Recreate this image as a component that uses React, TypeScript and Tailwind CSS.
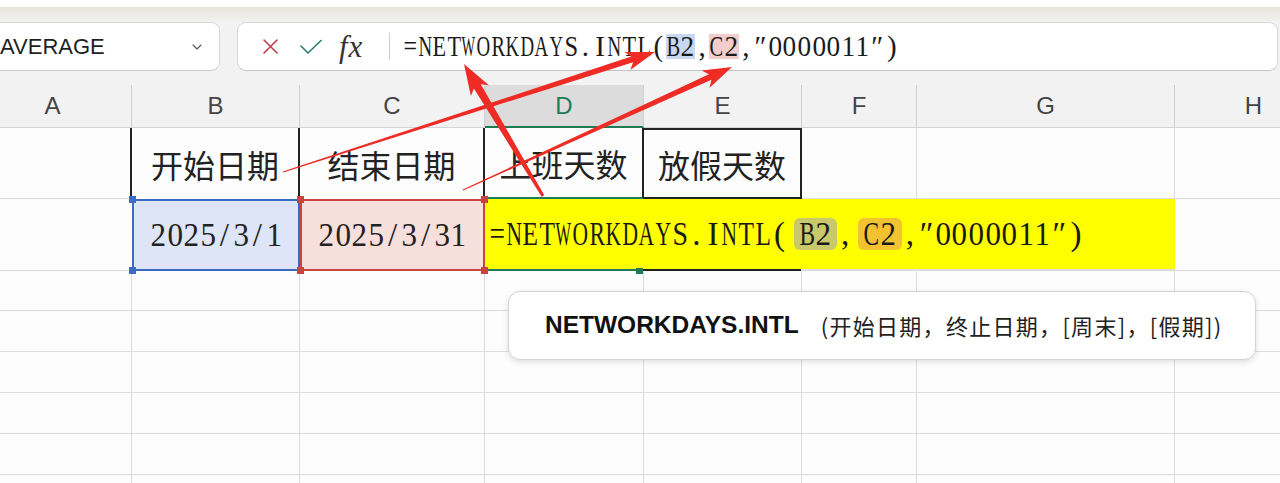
import React from 'react'
import { ChevronDown } from 'lucide-react'

// Times-like advance widths, used to squeeze glyphs into SimSun-style half-width cells
const ADV: Record<string, number> = {
  N: 0.722, E: 0.611, T: 0.611, W: 0.944, O: 0.722, R: 0.667, K: 0.722, D: 0.722,
  A: 0.722, Y: 0.722, S: 0.556, I: 0.333, L: 0.611, B: 0.667, C: 0.667,
  '=': 0.564, '(': 0.333, ')': 0.333, ',': 0.25, '.': 0.25, '″': 0.4, '/': 0.278,
}

function Mono({ text, cell }: { text: string; cell: string }) {
  return (
    <>
      {Array.from(text).map((ch, i) => {
        const s = Math.min(1, 0.47 / (ADV[ch] ?? 0.5))
        return (
          <span
            key={i}
            className={`inline-flex shrink-0 justify-center ${cell}`}
            style={s < 1 ? { transform: `scaleX(${s.toFixed(3)})` } : undefined}
          >
            {ch}
          </span>
        )
      })}
    </>
  )
}

function arrow(x0: number, y0: number, x1: number, y1: number, w0: number, w1: number, hl: number, hw: number) {
  const dx = x1 - x0
  const dy = y1 - y0
  const len = Math.hypot(dx, dy)
  const ux = dx / len
  const uy = dy / len
  const nx = -uy
  const ny = ux
  const bx = x1 - ux * hl
  const by = y1 - uy * hl
  const p = (x: number, y: number) => `${x.toFixed(1)},${y.toFixed(1)}`
  return [
    p(x0 + (nx * w0) / 2, y0 + (ny * w0) / 2),
    p(bx + (nx * w1) / 2, by + (ny * w1) / 2),
    p(bx - ux * 5 + (nx * hw) / 2, by - uy * 5 + (ny * hw) / 2),
    p(x1, y1),
    p(bx - ux * 5 - (nx * hw) / 2, by - uy * 5 - (ny * hw) / 2),
    p(bx - (nx * w1) / 2, by - (ny * w1) / 2),
    p(x0 - (nx * w0) / 2, y0 - (ny * w0) / 2),
  ].join(' ')
}

const ARROWS = [
  arrow(283, 172, 655, 52, 1.2, 6, 24, 19),
  arrow(463, 190, 732, 67, 1, 6, 24, 19),
  arrow(543, 196, 464, 64, 3, 8, 26, 21),
]

const HEAD = [
  { id: 'A', w: 'w-[158px]' },
  { id: 'B', w: 'w-[168px]' },
  { id: 'C', w: 'w-[185px]' },
  { id: 'D', w: 'w-[159px]' },
  { id: 'E', w: 'w-[158px]' },
  { id: 'F', w: 'w-[115px]' },
  { id: 'G', w: 'w-[258px]' },
  { id: 'H', w: 'w-[158px]' },
]

const GRID = 'shrink-0 border-r border-b border-[#dcdcdc]'
const CJK = "font-['Noto_Sans_CJK_SC',sans-serif]"
const SERIF = "font-['Liberation_Serif','Noto_Sans_CJK_SC',serif]"

function Square({ pos, color }: { pos: string; color: string }) {
  return <span className={`absolute z-10 h-[7px] w-[7px] ${pos} ${color}`} />
}

export default function App() {
  return (
    <div className="relative h-[483px] w-[1280px] overflow-hidden bg-white font-['Liberation_Sans',sans-serif] text-[#222]">
      <div className="h-[7px] bg-white" />
      <div className="h-[15px] bg-linear-to-b from-[#e7e4dc] to-[#f2f2f2]" />

      {/* name box + formula bar */}
      <div className="flex h-[49px] bg-[#f2f2f2]">
        <div className="ml-[-14px] flex h-full w-[234px] shrink-0 items-center rounded-[9px] border border-[#d8d8d8] border-b-[#c9c9c9] bg-white pl-[13px] pr-[14px]">
          <span className="text-[22px] text-[#1f1f1f]">AVERAGE</span>
          <ChevronDown size={16} strokeWidth={1.6} className="ml-auto text-[#555]" />
        </div>
        <div className="ml-[17px] flex h-full w-[1041px] shrink-0 items-center rounded-[9px] border border-[#d8d8d8] border-b-[#c4c4c4] bg-white pl-[25px]">
          <svg width="15" height="15" viewBox="0 0 15 15" className="shrink-0">
            <path d="M1 1L14 14M14 1L1 14" stroke="#c33a4e" strokeWidth="1.6" strokeLinecap="round" />
          </svg>
          <svg width="22" height="16" viewBox="0 0 22 16" className="ml-[22px] shrink-0">
            <path d="M1 7L8 14L21 1.5" stroke="#2c7c6c" strokeWidth="1.6" fill="none" strokeLinecap="round" strokeLinejoin="round" />
          </svg>
          <span className="ml-[17px] w-[28px] font-['Liberation_Serif',serif] text-[31px] italic leading-none tracking-[1px] text-[#333]">fx</span>
          <span className="ml-[22px] h-[27px] w-px bg-[#cfcfcf]" />
          <div className={`ml-[13px] flex items-center ${SERIF} text-[29px] leading-none text-[#1a1a1a]`}>
            <Mono text="=NETWORKDAYS.INTL(" cell="w-[14.6px]" />
            <span className="flex h-[25px] items-center bg-[#c9d8f1]">
              <Mono text="B2" cell="w-[14.6px]" />
            </span>
            <Mono text="," cell="w-[14.6px]" />
            <span className="flex h-[25px] items-center bg-[#f1cdcd]">
              <Mono text="C2" cell="w-[14.6px]" />
            </span>
            <Mono text=",″0000011″)" cell="w-[14.6px]" />
          </div>
        </div>
      </div>
      <div className="h-[14px] bg-[#f2f2f2]" />

      {/* column headers */}
      <div className="ml-[-26px] flex h-[43px] bg-[#f2f2f2]">
        {HEAD.map((c) =>
          c.id === 'D' ? (
            <div key={c.id} className={`${c.w} flex shrink-0 items-center justify-center border-r border-b-2 border-r-[#cfcfcf] border-b-[#1e7b56] bg-[#dcdcdc] text-[24px] text-[#1f7a5c]`}>
              {c.id}
            </div>
          ) : (
            <div key={c.id} className={`${c.w} flex shrink-0 items-center justify-center border-r border-b border-r-[#cfcfcf] border-b-[#d4d4d4] text-[24px] text-[#444]`}>
              {c.id}
            </div>
          ),
        )}
      </div>

      {/* sheet */}
      <div className="ml-[-26px] flex flex-col bg-[#fdfdfd]">
        <div className="flex h-[71px]">
          <div className="w-[158px] shrink-0 border-r-2 border-b border-r-[#222] border-b-[#dcdcdc]" />
          <div className={`flex w-[168px] shrink-0 items-center justify-center border-r-2 border-r-[#222] ${CJK} text-[32px]`}>开始日期</div>
          <div className={`flex w-[185px] shrink-0 items-center justify-center border-r-2 border-r-[#222] ${CJK} text-[32px]`}>结束日期</div>
          <div className={`flex w-[159px] shrink-0 items-center justify-center border-r-2 border-b-2 border-r-[#222] border-b-[#1e7b56] ${CJK} text-[32px]`}>上班天数</div>
          <div className={`flex w-[158px] shrink-0 items-center justify-center border-t-2 border-r-2 border-b-2 border-[#222] ${CJK} text-[32px]`}>放假天数</div>
          <div className={`w-[115px] ${GRID}`} />
          <div className={`w-[258px] ${GRID}`} />
          <div className={`w-[158px] ${GRID}`} />
        </div>

        <div className="flex h-[72px]">
          <div className="w-[158px] shrink-0 border-b border-[#dcdcdc]" />
          <div className={`relative flex w-[168px] shrink-0 items-center justify-center border-2 border-[#3b6bc5] bg-[#dde5f6] ${SERIF} text-[33px] leading-none`}>
            <Mono text="2025/3/1" cell="w-[16.5px]" />
            <Square pos="-left-[5px] -top-[5px]" color="bg-[#3b6bc5]" />
            <Square pos="-left-[5px] -bottom-[5px]" color="bg-[#3b6bc5]" />
          </div>
          <div className={`relative flex w-[185px] shrink-0 items-center justify-center border-2 border-[#c9443f] bg-[#f7dfdc] ${SERIF} text-[33px] leading-none`}>
            <Mono text="2025/3/31" cell="w-[16.5px]" />
            <Square pos="-left-[5px] -top-[5px]" color="bg-[#c9443f]" />
            <Square pos="-left-[5px] -bottom-[5px]" color="bg-[#c9443f]" />
            <Square pos="-right-[5px] -top-[5px]" color="bg-[#c9443f]" />
            <Square pos="-right-[5px] -bottom-[5px]" color="bg-[#c9443f]" />
          </div>
          <div className="relative flex w-[690px] shrink-0 flex-col bg-[#ffff00]">
            <div className={`flex flex-1 items-center pl-[4px] ${SERIF} text-[33px] leading-none text-[#1a1a1a]`}>
              <Mono text="=NETWORKDAYS.INTL(" cell="w-[16.6px]" />
              <span className="ml-[6px] flex h-[32px] shrink-0 items-center rounded-[6px] bg-[#c9c86a] px-[5px]">
                <Mono text="B2" cell="w-[16.6px]" />
              </span>
              <Mono text="," cell="w-[16.6px]" />
              <span className="ml-[5px] flex h-[32px] shrink-0 items-center rounded-[6px] bg-[#f1c232] px-[5px]">
                <Mono text="C2" cell="w-[16.6px]" />
              </span>
              <Mono text=",″0000011″)" cell="w-[16.6px]" />
            </div>
            <div className="flex h-[2px]">
              <div className="w-[158px] shrink-0 bg-[#1e7b56]" />
              <div className="w-[158px] shrink-0 bg-[#222]" />
              <div className="flex-1 bg-[#dcdcdc]" />
            </div>
            <span className="absolute -bottom-[3px] left-[151px] h-[6px] w-[7px] bg-[#1e7b56]" />
          </div>
          <div className="w-[158px] shrink-0 border-b border-[#dcdcdc]" />
        </div>

        {['h-[40px]', 'h-[41px]', 'h-[41px]', 'h-[41px]', 'h-[41px]', 'h-[41px]'].map((h, r) => (
          <div key={r} className={`flex ${h}`}>
            {HEAD.map((c) => (
              <div key={c.id} className={`${c.w} ${GRID}`} />
            ))}
          </div>
        ))}
      </div>

      {/* function hint */}
      <div className="absolute left-[508px] top-[291px] flex h-[69px] w-[748px] items-center rounded-[12px] border border-[#d4d4d4] bg-white pl-[36px] shadow-[0_2px_6px_rgba(0,0,0,0.12)]">
        <span className="text-[24.5px] font-bold text-[#111]">NETWORKDAYS.INTL</span>
        <span className={`ml-[22px] ${CJK} text-[22px] tracking-[1.3px] text-[#222]`}>(开始日期，终止日期，[周末]，[假期])</span>
      </div>

      {/* annotation arrows */}
      <svg className="pointer-events-none absolute inset-0 z-20" width="1280" height="483" viewBox="0 0 1280 483">
        {ARROWS.map((pts, i) => (
          <polygon key={i} points={pts} fill="#ee2b24" />
        ))}
      </svg>
    </div>
  )
}
